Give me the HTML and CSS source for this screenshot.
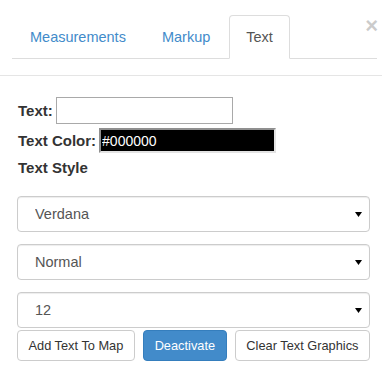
FILE: index.html
```html
<!DOCTYPE html>
<html>
<head>
<meta charset="utf-8">
<link rel="stylesheet" href="styles.css">
</head>
<body>
<div class="panel">
  <div class="header">
    <button class="close" type="button">×</button>
    <ul class="tabs">
      <li class="tab"><a>Measurements</a></li>
      <li class="tab"><a>Markup</a></li>
      <li class="tab active"><a>Text</a></li>
    </ul>
  </div>
  <div class="body">
    <div class="row row-text">
      <label class="lbl">Text:</label>
      <input class="text-input" type="text">
    </div>
    <div class="row row-color">
      <label class="lbl">Text Color:</label>
      <input class="color-input" type="text" value="#000000">
    </div>
    <div class="row row-style">
      <span class="lbl">Text Style</span>
    </div>
    <select class="sel sel-first"><option>Verdana</option></select>
    <select class="sel"><option>Normal</option></select>
    <select class="sel"><option>12</option></select>
    <div class="btns">
      <button class="btn" type="button">Add Text To Map</button>
      <button class="btn btn-primary" type="button">Deactivate</button>
      <button class="btn" type="button">Clear Text Graphics</button>
    </div>
  </div>
</div>
</body>
</html>
```
FILE: styles.css
```css
html, body {
  margin: 0;
  padding: 0;
  background: #fff;
}
body {
  font-family: "Liberation Sans", Arial, sans-serif;
  font-size: 14px;
  color: #333;
}
.panel {
  width: 382px;
}
.header {
  position: relative;
  padding: 15px 5px 16px 12px;
  border-bottom: 1px solid #e5e5e5;
}
.close {
  position: absolute;
  top: 15px;
  right: 4px;
  padding: 0;
  margin: 0;
  border: 0;
  background: transparent;
  font-family: "Liberation Sans", Arial, sans-serif;
  font-size: 22px;
  font-weight: bold;
  line-height: 1;
  color: #000;
  opacity: 0.2;
  text-shadow: 0 1px 0 #fff;
}
.tabs {
  display: flex;
  list-style: none;
  margin: 0;
  padding: 0 0 0 1px;
  border-bottom: 1px solid #ddd;
}
.tab {
  margin-bottom: -1px;
  margin-right: 2px;
}
.tab a {
  display: block;
  padding: 10px 16px;
  font-size: 14.5px;
  line-height: 22px;
  border: 1px solid transparent;
  border-radius: 4px 4px 0 0;
  color: #428bca;
}
.tab.active a {
  color: #555;
  background: #fff;
  border-color: #ddd #ddd transparent;
}
.body {
  padding: 0 12px 0 17px;
}
.row {
  display: flex;
  align-items: center;
}
.lbl {
  font-weight: bold;
  font-size: 15px;
  padding-left: 1px;
  line-height: 20px;
}
.row-text {
  margin-top: 21px;
}
.text-input {
  box-sizing: border-box;
  width: 177px;
  height: 27px;
  margin: 0 0 0 3px;
  border: 1px solid #a9a9a9;
  padding: 1px 3px;
  font: 14px "Liberation Sans", Arial, sans-serif;
}
.row-color {
  margin-top: 4px;
}
.color-input {
  box-sizing: border-box;
  width: 177px;
  height: 25px;
  margin: 0 0 0 3px;
  border-width: 2px;
  border-style: solid;
  border-color: #8f8f8f #e3e3e3 #e3e3e3 #8f8f8f;
  padding: 1px 1px 0;
  background: #000;
  color: #fff;
  font: 14px "Liberation Sans", Arial, sans-serif;
}
.row-style {
  margin-top: 5px;
}
.sel {
  display: block;
  box-sizing: border-box;
  width: 353px;
  height: 36px;
  margin: 12px 0 0;
  padding: 0 20px 0 17px;
  border: 1px solid #ccc;
  border-radius: 4px;
  box-shadow: inset 0 1px 1px rgba(0, 0, 0, 0.075);
  -webkit-appearance: none;
  appearance: none;
  background: #fff url("data:image/svg+xml;utf8,<svg xmlns='http://www.w3.org/2000/svg' width='7' height='5'><path d='M0 0H7L3.5 5Z' fill='%23000'/></svg>") no-repeat right 7px center;
  font: 14.5px "Liberation Sans", Arial, sans-serif;
  color: #555;
}
.sel-first {
  margin-top: 18px;
}
.btns {
  display: flex;
  justify-content: space-between;
  width: 353px;
  margin-top: 2px;
}
.btn {
  flex: 0 0 auto;
  white-space: nowrap;
  box-sizing: border-box;
  height: 31px;
  padding: 0 10.5px;
  border: 1px solid #ccc;
  border-radius: 4px;
  background: #fff;
  color: #333;
  font: 12.8px "Liberation Sans", Arial, sans-serif;
  line-height: 29px;
}
.btn-primary {
  background: #428bca;
  border-color: #357ebd;
  color: #fff;
}
```
